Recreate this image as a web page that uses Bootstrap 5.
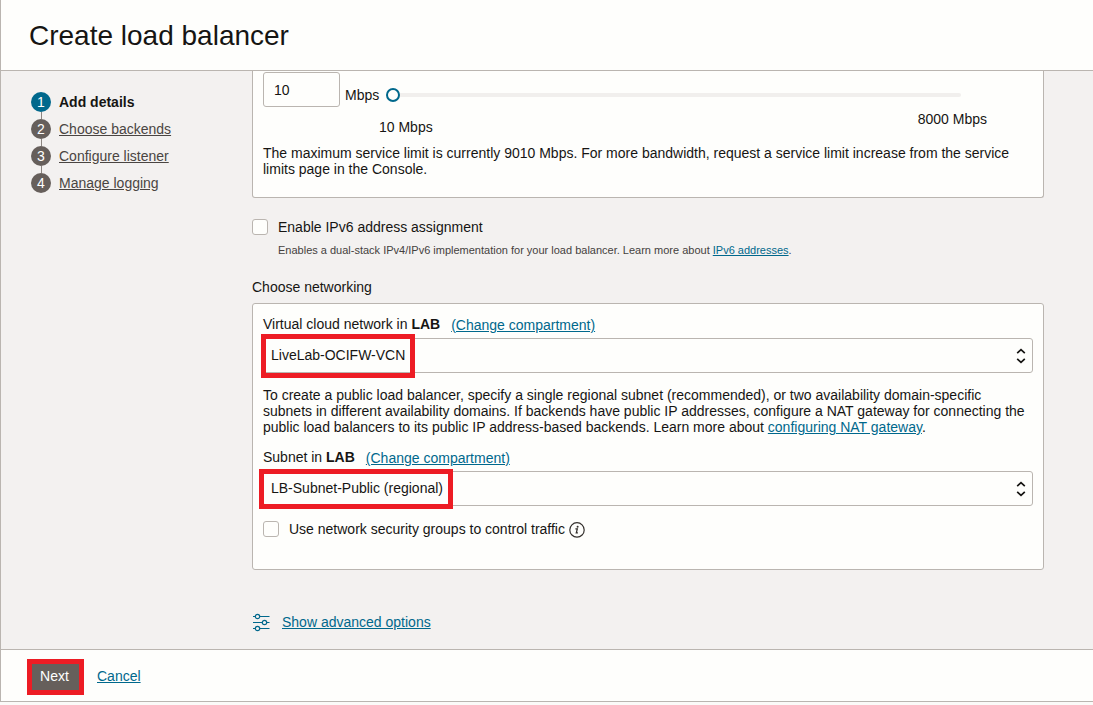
<!DOCTYPE html>
<html lang="en">
<head>
<meta charset="utf-8">
<meta name="viewport" content="width=device-width, initial-scale=1">
<title>Create load balancer</title>
<link href="https://cdn.jsdelivr.net/npm/bootstrap@5.3.0/dist/css/bootstrap.min.css" rel="stylesheet">
<style>
  :root { --line: #bab5b0; --teal: #00688c; --paper: #fefefc; --mark-red: #ed1c24; }
  body { font: 14px/16px "Liberation Sans", Arial, sans-serif; color: #161513; background: #fbfaf8; padding-bottom: 3px; }
  a { color: var(--teal); }
  .shell { border-left: 1px solid var(--line); border-bottom: 1px solid var(--line); background: #f3f1f0; }
  .page-head { background: var(--paper); border-bottom: 1px solid var(--line); padding: 20px 28px 18px; }
  .page-head h1 { font-size: 28px; line-height: 32px; font-weight: 400; }
  .steps-nav { width: 251px; padding: 21px 0 0 30px; }
  .step { position: relative; margin-bottom: 7px; }
  .step a { color: #4a4542; }
  .step .dot { width: 20px; height: 20px; border-radius: 50%; background: #665f5b; color: #fff; line-height: 20px; text-align: center; }
  .step.active .dot { background: var(--teal); }
  .step + .step::before { content: ""; position: absolute; left: 10px; top: -7px; height: 7px; border-left: 1px solid #8b8580; }
  .content-col { margin-right: 49px; }
  .panel { background: var(--paper); border: 1px solid var(--line); border-radius: 3px; padding: 12px 10px; }
  .panel-cut { border-top: 0; border-radius: 0 0 3px 3px; padding: 1px 10px 20px; }
  .form-control, .form-select { font-size: 14px; line-height: 16px; height: 35px; border: 1px solid var(--line); border-radius: 3px; color: #161513; background-color: var(--paper); }
  .form-control { width: 77px; padding: 0 10px; }
  .form-select { padding: 0 30px 2px 7px; background-size: 10px 16px; background-position: right 6px center;
    background-image: url("data:image/svg+xml,%3Csvg xmlns='http://www.w3.org/2000/svg' viewBox='0 0 10 16'%3E%3Cpath d='M1.2 5.2 5 1.7l3.800 3.500M1.200 10.800 5 14.300l3.800-3.500' fill='none' stroke='%23161513' stroke-width='1.700'/%3E%3C/svg%3E"); }
  .unit { margin: 15px 0 0 5px; }
  .bandwidth { margin: 16px 72px 0 7px; }
  .bandwidth .form-range { height: 14px; padding: 0; display: block; }
  .form-range::-webkit-slider-runnable-track { height: 4px; background: #f1efed; border-radius: 2px; }
  .form-range::-webkit-slider-thumb { width: 14px; height: 14px; margin-top: -5px; background: var(--paper); border: 2px solid var(--teal); }
  .range-labels { margin: 4px 46px 10px 116px; }
  .check-row label { margin-left: 10px; margin-right: 4px; }
  .form-check-input { width: 16px; height: 16px; margin: 0; border: 1px solid var(--line); background-color: var(--paper); flex: none; }
  .form-check-input[type=checkbox] { border-radius: 3px; }
  .ipv6-row { margin-top: 21px; }
  .hint { font-size: 11px; color: #45413e; margin: 7px 0 0 26px; }
  .section-name { font-size: 14px; line-height: 16px; font-weight: 400; margin: 21px 0 8px; }
  .field-head { height: 16px; margin-bottom: 6px; gap: 11px; }
  .field-head a { padding-top: 1px; }
  .nat-note { margin: 14px 0; }
  .nsg-row { margin: 15px 0 20px; }
  .advanced { margin-top: 42px; gap: 12px; }
  .callout { position: absolute; border: 5px solid var(--mark-red); pointer-events: none; }
  .callout-vcn { left: -2px; top: -4px; width: 154px; height: 44px; }
  .callout-subnet { left: -4px; top: -2px; width: 194px; height: 40px; }
  .page-foot { background: var(--paper); border-top: 1px solid var(--line); padding: 14px 31px 11px; gap: 18px; }
  .page-foot a { padding-bottom: 2px; }
  .btn-next { width: 47px; height: 26px; padding: 0 2px 2px 0; border: 0; border-radius: 0; font-size: 14px; line-height: 16px; color: #fff; background: #665f5b; outline: 5px solid var(--mark-red); }
  .btn-next:hover { color: #fff; background: #4e4844; }
</style>
</head>
<body class="d-flex flex-column min-vh-100">
<div class="shell d-flex flex-column flex-grow-1">
  <header class="page-head"><h1 class="m-0">Create load balancer</h1></header>

  <div class="d-flex flex-grow-1">
    <nav class="steps-nav flex-shrink-0" aria-label="Steps">
      <ol class="list-unstyled m-0">
        <li class="step active d-flex align-items-center gap-2"><span class="dot">1</span><strong>Add details</strong></li>
        <li class="step d-flex align-items-center gap-2"><span class="dot">2</span><a href="#">Choose backends</a></li>
        <li class="step d-flex align-items-center gap-2"><span class="dot">3</span><a href="#">Configure listener</a></li>
        <li class="step d-flex align-items-center gap-2"><span class="dot">4</span><a href="#">Manage logging</a></li>
      </ol>
    </nav>

    <main class="content-col flex-grow-1 pb-3">
      <section class="panel panel-cut">
        <div class="d-flex align-items-start">
          <input class="form-control flex-shrink-0" type="text" id="mbps" value="10">
          <label class="unit" for="mbps">Mbps</label>
          <div class="bandwidth flex-grow-1"><input class="form-range" type="range" min="10" max="8000" value="10" aria-label="Bandwidth"></div>
        </div>
        <div class="range-labels d-flex justify-content-between"><span class="pt-2">10 Mbps</span><span>8000 Mbps</span></div>
        <p class="m-0">The maximum service limit is currently 9010 Mbps. For more bandwidth, request a service limit increase from the service limits page in the Console.</p>
      </section>

      <div class="check-row ipv6-row d-flex align-items-center">
        <input class="form-check-input" type="checkbox" id="ipv6"><label for="ipv6">Enable IPv6 address assignment</label>
      </div>
      <p class="hint">Enables a dual-stack IPv4/IPv6 implementation for your load balancer. Learn more about <a href="#">IPv6 addresses</a>.</p>

      <h2 class="section-name">Choose networking</h2>
      <section class="panel">
        <div class="field-head d-flex"><label for="vcn">Virtual cloud network in <strong>LAB</strong></label><a href="#">(Change compartment)</a></div>
        <div class="position-relative">
          <select class="form-select" id="vcn"><option>LiveLab-OCIFW-VCN</option></select>
          <span class="callout callout-vcn"></span>
        </div>
        <p class="nat-note">To create a public load balancer, specify a single regional subnet (recommended), or two availability domain-specific subnets in different availability domains. If backends have public IP addresses, configure a NAT gateway for connecting the public load balancers to its public IP address-based backends. Learn more about <a href="#">configuring NAT gateway</a>.</p>
        <div class="field-head d-flex"><label for="subnet">Subnet in <strong>LAB</strong></label><a href="#">(Change compartment)</a></div>
        <div class="position-relative">
          <select class="form-select" id="subnet"><option>LB-Subnet-Public (regional)</option></select>
          <span class="callout callout-subnet"></span>
        </div>
        <div class="check-row nsg-row d-flex align-items-center">
          <input class="form-check-input" type="checkbox" id="nsg"><label for="nsg">Use network security groups to control traffic</label>
          <svg width="16" height="16" viewBox="0 0 16 16" overflow="visible" aria-hidden="true"><circle cx="8" cy="8.900" r="7.200" fill="none" stroke="#34302d" stroke-width="1.200"/><circle cx="8.600" cy="5.700" r="1" fill="#34302d"/><path d="M6.400 7.900h1.900l-1 4h1.600" fill="none" stroke="#34302d" stroke-width="1.300"/></svg>
        </div>
      </section>

      <div class="advanced d-flex align-items-center">
        <svg width="18" height="20" viewBox="0 0 18 20" fill="none" stroke="#00688c" stroke-width="1.200" aria-hidden="true"><path d="M1 4.500h2M8 4.500h9.500M1 10.500h9M15 10.500h2.500M1 16.500h2M8 16.500h9.500"/><circle cx="5.500" cy="4.500" r="2.200"/><circle cx="12.500" cy="10.500" r="2.200"/><circle cx="5.500" cy="16.500" r="2.200"/></svg>
        <a href="#">Show advanced options</a>
      </div>
    </main>
  </div>

  <footer class="page-foot d-flex align-items-center">
    <button class="btn btn-next" type="button">Next</button>
    <a href="#">Cancel</a>
  </footer>
</div>
<script src="https://cdn.jsdelivr.net/npm/bootstrap@5.3.0/dist/js/bootstrap.bundle.min.js"></script>
</body>
</html>
